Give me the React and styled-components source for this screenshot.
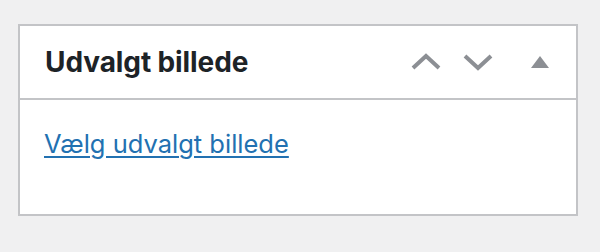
import React from 'react'
import styled, { createGlobalStyle } from 'styled-components'

const GlobalStyle = createGlobalStyle`
  html, body {
    margin: 0;
    padding: 0;
    background: #f0f0f1;
    font-family: Inter, "Noto Sans", sans-serif;
  }
`

const Page = styled.div`
  padding: 24px 22px 36px 18px;
`

const Postbox = styled.div`
  width: 556px;
  background: #fff;
  border: 2px solid #c3c4c7;
`

const Header = styled.div`
  display: flex;
  align-items: center;
  height: 72px;
  border-bottom: 2px solid #c3c4c7;
`

const Title = styled.h2`
  flex: 1;
  margin: 0;
  padding: 0 24px 0 25px;
  font-size: 28px;
  font-weight: 700;
  color: #1d2327;
  letter-spacing: -0.1px;
`

const Actions = styled.div`
  display: flex;
  height: 100%;
`

const HandleButton = styled.button`
  display: flex;
  align-items: center;
  justify-content: center;
  width: ${({ wide }) => (wide ? '72px' : '52px')};
  height: 100%;
  padding: 0;
  border: 0;
  background: none;
  color: #8c8f94;
  cursor: pointer;
`

const Inside = styled.div`
  height: 114px;
  padding: 24px 24px 0 24px;
  box-sizing: border-box;
`

const Link = styled.a`
  font-size: 25.5px;
  line-height: 39px;
  color: #2271b1;
  text-decoration: underline;
  text-underline-offset: 3px;
  text-decoration-thickness: 2px;
`

const Chevron = ({ down }) => (
  <svg width="30" height="18" viewBox="0 0 30 18">
    <polyline
      points={down ? '2,3 15,15 28,3' : '2,15 15,3 28,15'}
      fill="none"
      stroke="currentColor"
      strokeWidth="4"
    />
  </svg>
)

const Triangle = () => (
  <svg width="18" height="12" viewBox="0 0 18 12">
    <polygon points="9,0 18,12 0,12" fill="currentColor" />
  </svg>
)

const App = () => (
  <Page>
    <GlobalStyle />
    <Postbox>
      <Header>
        <Title>Udvalgt billede</Title>
        <Actions>
          <HandleButton aria-label="Flyt op">
            <Chevron />
          </HandleButton>
          <HandleButton aria-label="Flyt ned">
            <Chevron down />
          </HandleButton>
          <HandleButton wide aria-label="Skift panel">
            <Triangle />
          </HandleButton>
        </Actions>
      </Header>
      <Inside>
        <Link href="#">Vælg udvalgt billede</Link>
      </Inside>
    </Postbox>
  </Page>
)

export default App
